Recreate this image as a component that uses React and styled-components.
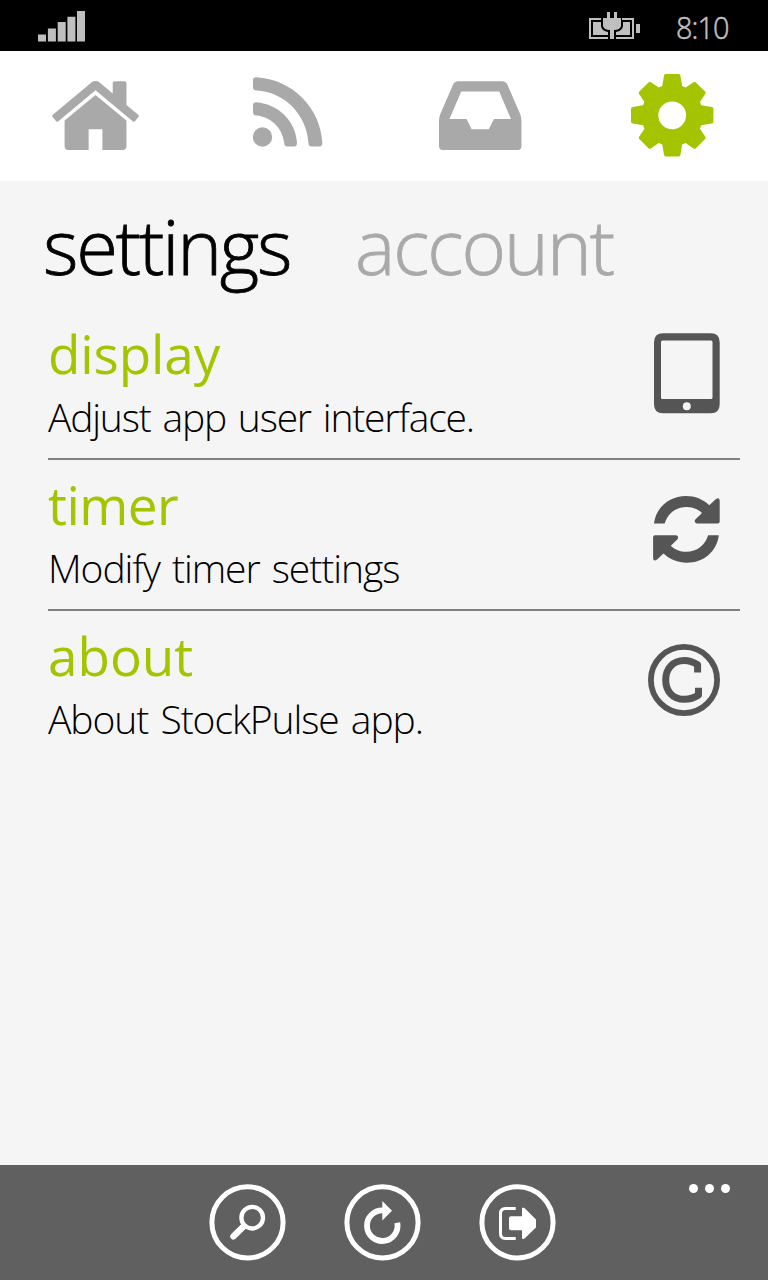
import React from "react";
import styled, { createGlobalStyle } from "styled-components";

const GlobalStyle = createGlobalStyle`
  * { box-sizing: border-box; }
  body { margin: 0; background: #f5f5f5; }
  button { border: 0; padding: 0; background: none; font: inherit; color: inherit; }
  svg { display: block; flex: none; }
`;

const green = "#a4c400";
const gray = "#a9a9a9";

const Screen = styled.div`
  display: flex;
  flex-direction: column;
  width: 768px;
  height: 1280px;
  background: #f5f5f5;
  font-family: "Open Sans", "Noto Sans", sans-serif;
  overflow: hidden;
`;

const StatusBar = styled.header`
  display: flex;
  align-items: center;
  height: 51px;
  padding: 0 38px;
  background: #000;
  color: #bfbfbf;
`;

const Signal = styled.svg`
  margin-right: auto;
`;

const Clock = styled.time`
  width: 55px;
  margin-left: 36px;
  margin-right: -1px;
  font-size: 32px;
  font-weight: 300;
  line-height: 51px;
  letter-spacing: -1px;
  white-space: nowrap;
  -webkit-text-stroke: 0.6px #bfbfbf;
  padding-top: 1px;
  transform: scaleX(0.9);
  transform-origin: left;
`;

const Tabs = styled.nav`
  display: grid;
  grid-template-columns: repeat(4, 1fr);
  height: 130px;
  background: #fff;
`;

const Tab = styled.button`
  color: ${(p) => (p.$active ? green : gray)};
`;

const Pivot = styled.div`
  display: flex;
  height: 128px;
  padding: 14px 0 0 43px;
`;

const PivotItem = styled.h1`
  width: ${(p) => p.$width}px;
  margin: 0;
  font-size: 76px;
  font-weight: 300;
  line-height: 101px;
  letter-spacing: ${(p) => p.$spacing}px;
  color: ${(p) => (p.$active ? "#000" : gray)};
  -webkit-text-stroke: 0.8px currentColor;
  white-space: nowrap;
`;

const List = styled.main`
  flex: 1;
  padding: 0 28px 0 48px;
`;

const Row = styled.section`
  display: flex;
  justify-content: space-between;
  height: 151px;
  padding-right: 20px;
  border-bottom: 2px solid ${(p) => (p.$last ? "transparent" : "#808080")};
  color: #555;
`;

const RowText = styled.div`
  padding-top: 12px;
`;

const RowTitle = styled.h2`
  margin: 0 0 5px;
  font-size: 53px;
  font-weight: 400;
  line-height: 65px;
  letter-spacing: ${(p) => p.$spacing}px;
  color: ${green};
  white-space: nowrap;
`;

const RowNote = styled.p`
  margin: 0;
  font-size: 39px;
  font-weight: 300;
  line-height: 52px;
  letter-spacing: ${(p) => p.$spacing}px;
  word-spacing: 3px;
  color: #000;
  white-space: nowrap;
`;

const AppBar = styled.footer`
  display: flex;
  height: 115px;
  padding-left: 207px;
  background: #606060;
  color: #fff;
`;

const Action = styled.button`
  width: 135px;
  height: 115px;
`;

const More = styled.button`
  display: flex;
  gap: 7px;
  height: 9px;
  margin: 19px 38px 0 auto;
`;

const Dot = styled.span`
  width: 9px;
  height: 9px;
  border-radius: 50%;
  background: #fff;
`;

const HomeIcon = () => (
  <svg width="192" height="130" viewBox="0 51 192 130" fill="currentColor">
    <g transform="translate(47.4 67.5) scale(.0537)">
      <path d="M1472 992v480q0 26-19 45t-45 19h-384v-384h-256v384h-384q-26 0-45-19t-19-45v-480q0-1 .5-3t.5-3l575-474 575 474q1 2 1 6zm223-69l-62 74q-8 9-21 11h-3q-13 0-21-7l-692-577-692 577q-12 8-24 7-13-2-21-11l-62-74q-8-10-7-23.5t11-21.5l719-599q32-26 76-26t76 26l244 204v-195q0-14 9-23t23-9h192q14 0 23 9t9 23v408l219 182q10 8 11 21.5t-7 23.5z" />
    </g>
  </svg>
);

const FeedIcon = () => (
  <svg width="192" height="130" viewBox="192 51 192 130" fill="currentColor">
    <circle cx="262.5" cy="137" r="9.7" />
    <path d="M256 77.3C293 79 321 109 322.3 143Q322.3 146.6 319 146.6H311.5Q308.5 146.6 308.5 143C306.500 114 284 92 256.500 90.600Q253 90.400 253 87V80.500Q253 77.300 256 77.300Z" />
    <path d="M256 102.300C279 104 296 122 297 143Q297 146.600 294 146.600H287.500Q284.300 146.600 284.200 143C282.500 128 271 117 256.500 115.600Q253 115.300 253 112V105.500Q253 102.300 256 102.300Z" />
  </svg>
);

const InboxIcon = () => (
  <svg width="192" height="130" viewBox="384 51 192 130" fill="currentColor">
    <g transform="translate(432.100 67.500) scale(.0537)">
      <path d="M1151 960h316q-1-3-2.5-8t-2.5-8l-212-496h-708l-212 496q-1 2-2.5 8t-2.5 8h316l95 192h320zm513 30v482q0 26-19 45t-45 19h-1408q-26 0-45-19t-19-45v-482q0-62 25-123l238-552q10-25 36.5-42t52.5-17h832q26 0 52.5 17t36.500 42l238 552q25 61 25 123z" />
    </g>
  </svg>
);

const toothAngles = [0, 45, 90, 135, 180, 225, 270, 315];

const GearIcon = () => (
  <svg width="192" height="130" viewBox="576 51 192 130" fill="currentColor">
    <g transform="translate(672.200 115.300)">
      <circle r="22.300" fill="none" stroke="currentColor" strokeWidth="16.800" />
      {toothAngles.map((a) => (
        <path
          key={a}
          transform={`rotate(${a})`}
          d={
            a % 90
              ? "M-10.500-27L-8.300-38.500Q-8-40-6.500-40H6.500Q8-40 8.300-38.500L10.500-27Z"
              : "M-10.500-26L-8.200-39.500Q-8-41.200-6.500-41.200H6.500Q8-41.200 8.200-39.500L10.500-26Z"
          }
        />
      ))}
    </g>
  </svg>
);

const BatteryIcon = () => (
  <svg width="51" height="51" viewBox="589 0 51 51" fill="currentColor">
    <path d="M589 18H601V20H591V37H608V39H589ZM634 18H622V20H632V37H616V39H634Z" />
    <path d="M593 22H601V26Q601.500 31 608 32V35H593ZM630 22H623V26Q622.500 31 616 32V35H630Z" />
    <path d="M607 12H610V18H614V12H617V18H621V26Q620 30 614 30V39H610V30Q604 30 603 26V18H607ZM636 24H640V33H636Z" />
  </svg>
);

const TabletIcon = () => (
  <svg width="72" height="149" viewBox="648 309 72 149" fill="currentColor">
    <path fillRule="evenodd" d="M663 333.300H710.700Q719.700 333.300 719.700 342.300V404.300Q719.700 413.300 710.700 413.300H663Q654 413.300 654 404.300V342.300Q654 333.300 663 333.300ZM662.500 340.500Q661 340.500 661 342V397.500Q661 399 662.500 399H711Q712.500 399 712.500 397.500V342Q712.500 340.500 711 340.500ZM690.800 406.300A4 4 0 1 0 682.800 406.300A4 4 0 1 0 690.800 406.300Z" />
  </svg>
);

const SyncIcon = () => (
  <svg width="72" height="149" viewBox="648 460 72 149" fill="currentColor">
    <path id="half" d="M654 523.500C656 507 669.500 496 686 496C695 496 703 499.200 709.300 505.200L715.700 499.300Q719.700 496.800 719.700 501V521.500Q719.700 523.500 717.700 523.500H697Q693.500 522.800 695.300 519.500L702 513C697.500 508.800 692.500 507 686.500 507C676 507 667.500 513.500 664.700 523.500Z" />
    <use href="#half" transform="rotate(180 686.400 529.400)" />
  </svg>
);

const CopyrightIcon = () => (
  <svg width="72" height="149" viewBox="648 611 72 149" fill="none" stroke="currentColor">
    <circle cx="684" cy="680" r="33.100" strokeWidth="5.800" />
    <path strokeWidth="7" d="M697.600 672.600V664.800Q691 660.500 684.500 660.500C672.500 660.500 665.700 669 665.700 680C665.700 691 672.500 699.300 684.500 699.300Q692 699.300 698.500 695V687.800" strokeLinejoin="round" />
  </svg>
);

const Ring = ({ cx, children }) => (
  <svg width="135" height="115" viewBox={`${cx - 40.5} 1165 135 115`} fill="none" stroke="currentColor">
    <circle cx={cx} cy="1222.400" r="35.600" strokeWidth="5" />
    {children}
  </svg>
);

const rows = [
  { title: "display", note: "Adjust app user interface.", Icon: TabletIcon, ts: -0.1, ns: -1.2 },
  { title: "timer", note: "Modify timer settings", Icon: SyncIcon, ts: -0.5, ns: -1.05 },
  { title: "about", note: "About StockPulse app.", Icon: CopyrightIcon, ts: 0, ns: -1.05 },
];

export default function App() {
  return (
    <Screen>
      <GlobalStyle />
      <StatusBar>
        <Signal width="47" height="51" viewBox="38 0 47 51" fill="currentColor">
          <path d="M38 34.400h8v7h-8zM47.900 28.400h8v13h-8zM57.700 22h8v19.400h-8zM67.400 16.800h8v24.600h-8zM77 11h8v30.400h-8z" />
        </Signal>
        <BatteryIcon />
        <Clock>8:10</Clock>
      </StatusBar>
      <Tabs>
        <Tab><HomeIcon /></Tab>
        <Tab><FeedIcon /></Tab>
        <Tab><InboxIcon /></Tab>
        <Tab $active><GearIcon /></Tab>
      </Tabs>
      <Pivot>
        <PivotItem $active $width={312} $spacing={-2.2}>settings</PivotItem>
        <PivotItem $width={300} $spacing={-2}>account</PivotItem>
      </Pivot>
      <List>
        {rows.map(({ title, note, Icon, ts, ns }, i) => (
          <Row key={title} $last={i === rows.length - 1}>
            <RowText>
              <RowTitle $spacing={ts}>{title}</RowTitle>
              <RowNote $spacing={ns}>{note}</RowNote>
            </RowText>
            <Icon />
          </Row>
        ))}
      </List>
      <AppBar>
        <Action>
          <Ring cx={247.5}>
            <circle cx="252.200" cy="1217.700" r="10.800" strokeWidth="4.300" />
            <path d="M243 1227L233.500 1236.300" strokeWidth="6.500" strokeLinecap="round" />
          </Ring>
        </Action>
        <Action>
          <Ring cx={382.5}>
            <path d="M383 1210.400A15.300 15.300 0 1 0 397.300 1222.800" strokeWidth="5.800" />
            <path d="M382.300 1201L392 1210.700L382.300 1220.500Z" fill="currentColor" stroke="none" />
          </Ring>
        </Action>
        <Action>
          <Ring cx={517.5}>
            <path d="M515.700 1208.500H505.500Q500.500 1208.500 500.500 1213.500V1233.500Q500.500 1238.500 505.500 1238.500H515.700" strokeWidth="3" />
            <path d="M509 1218Q509 1216.300 511 1216.300H522V1209Q522 1206.500 524.500 1208L536 1219.500V1227.500L524.500 1238.500Q522 1240 522 1237.500V1230.300H511Q509 1230.300 509 1228.500Z" fill="currentColor" stroke="none" />
          </Ring>
        </Action>
        <More aria-label="more"><Dot /><Dot /><Dot /></More>
      </AppBar>
    </Screen>
  );
}
